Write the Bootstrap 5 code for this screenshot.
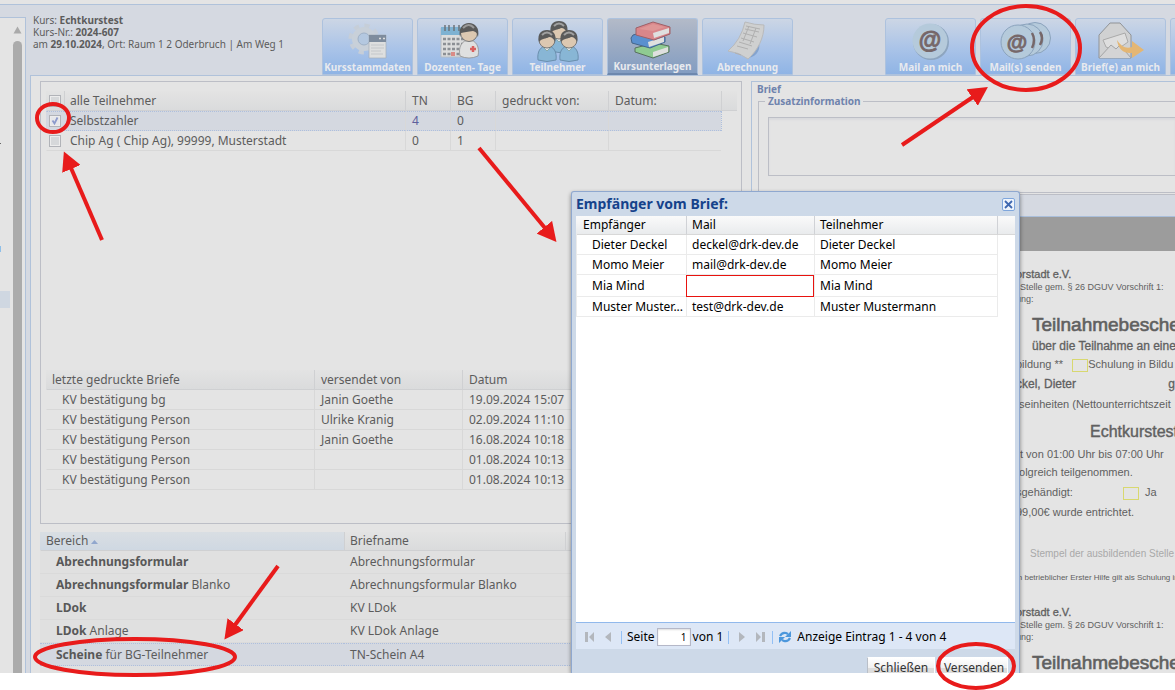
<!DOCTYPE html>
<html lang="de">
<head>
<meta charset="utf-8">
<meta name="viewport" content="width=device-width, initial-scale=1">
<title>Kursunterlagen</title>
<link href="https://cdn.jsdelivr.net/npm/bootstrap@5.3.0/dist/css/bootstrap.min.css" rel="stylesheet">
<script src="https://cdn.jsdelivr.net/npm/bootstrap@5.3.0/dist/js/bootstrap.bundle.min.js" defer></script>
<style>
  body { font: 12px/16px "Noto Sans", "Open Sans", sans-serif; color: #5c5c5c; background: #fff; }
  .app { height: calc(100vh - 17px); background: #e4e4e4; overflow: hidden; }
  .fit { min-width: 0; min-height: 0; }
  .topline { height: 5px; border-bottom: 1px solid #b0c2da; }
  .frame { background: #d5d9e1; }
  .side { width: 26px; margin-top: 12px; background: #e4e4e4; border: solid #b0c2da; border-width: 1px 1px 0 0; }
  .side .track { width: 9px; margin-left: 13px; padding-top: 8px; }
  .side .thumb { background: #ababab; border-radius: 5px 5px 0 0; margin-top: 7px; }
  .side .marks { width: 10px; top: 124px; left: 0; }
  .toolbar { height: 70px; padding-top: 13px; }
  .info { width: 292px; padding-left: 3px; margin-top: -4px; font-size: 10px; line-height: 12px; }
  .tool { width: 91px; height: 57px; border: 1px solid #adc2de; border-radius: 3px 3px 0 0; background: linear-gradient(#ccd6e5, #a9c3e8 55%, #8fb4e5); color: #e8eaee; font: bold 10px/14px "Noto Sans", sans-serif; }
  .tool svg { display: block; width: 89px; height: 40px; overflow: visible; }
  .tool.current { background: linear-gradient(#b3bac8, #98a9c3 55%, #839dc2); border-bottom: 2px solid #6d88ae; }
  .second { margin-left: 92px; }
  .work { background: #e4e4e4; border: solid #b0c2da; border-width: 1px 0 0 1px; padding: 5px 0 0 9px; gap: 9px; }
  .leftcol { width: 702px; gap: 8px; }
  .box { border: 1px solid #bcbec6; }
  .upper { padding: 9px 4px 33px 5px; height: 443px; }
  .grid { table-layout: fixed; border-collapse: separate; border-spacing: 0; line-height: 16px; }
  .grid th, .grid td { height: 20px; padding: 0 6px; border: solid #d8d8d8; border-width: 0 0 1px 1px; white-space: nowrap; overflow: hidden; font-weight: 400; }
  .grid td:first-child, .grid th:first-child { border-left-color: transparent; }
  .grid th { background: linear-gradient(#e3e3e3, #dadbdc); border-color: #cfd0d2; }
  .grid .pick td { background: #d4d8e0; border-top: 1px dotted #aebfdd; border-bottom: 1px dotted #aebfdd; }
  .grid .void { background: #e4e4e4; border: 0; }
  .grid tr.pick .void { background: #e4e4e4; border: 0; border-left: 1px dotted #aebfdd; }
  .grid td.who { border-left: 0; }
  .grid th.who { padding-left: 5px; }
  .grid .tick { padding: 0 0 0 2px; }
  .hit { color: #5d5f9c; }
  .tick input { display: block; appearance: none; width: 12px; height: 12px; margin: 0; border: 1px solid #b1b3b8; box-shadow: inset 0 0 0 1px #ececec; background: #d6d8da; border-radius: 0; }
  .tick input:checked { background: #e6e7ea url("data:image/svg+xml,%3Csvg xmlns='http://www.w3.org/2000/svg' viewBox='0 0 10 10'%3E%3Cpath d='M2.5 4.5l2 3 3-6' fill='none' stroke='%238d9bcc' stroke-width='1.8'/%3E%3C/svg%3E"); }
  .sent td, .sent th { padding-left: 6px; }
  .sent th:first-child { padding-left: 5px; }
  .sent td:first-child { padding-left: 15px; }
  .letters td { height: 23px; border-left: 0; border-color: #dadada; background: #e0e0e0; }
  .letters th { height: 19px; padding-left: 5px; }
  .letters td:first-child { padding-left: 16px; }
  .letters th.sorted { background: linear-gradient(#d9dee3, #cfd8e2); }
  .letters b { color: #585858; }
  .brief { border: solid #b0c2da; border-width: 1px 0 0 1px; font-size: 10px; color: #6f83ad; font-weight: 700; }
  .brief .head { padding: 0 5px; line-height: 15px; }
  .brief fieldset { margin: 4px 0 0 6px; border: solid #bcbec6; border-width: 1px 0 1px 1px; height: 92px; padding: 15px 0 0 9px; }
  .brief .cap { position: absolute; top: -8px; left: 6px; padding: 0 3px; background: #e4e4e4; line-height: 15px; }
  .brief textarea { display: block; width: 100%; height: 59px; border: 1px solid #bcbec6; border-right: 0; background: #e4e4e4; resize: none; box-shadow: inset 0 2px 2px #d9dadd; }
  .preview { margin-top: 1px; border-top: 1px solid #bcbec6; }
  .preview .bar { height: 22px; background: #d5d9e1; border-bottom: 1px solid #aabfdb; }
  .preview .dark { height: 34px; background: #9c9c9c; margin-bottom: 16px; }
  .doc { padding-left: 265px; font: 11px/18px "Liberation Sans", Arial, sans-serif; color: #606060; white-space: nowrap; }
  .doc .org { line-height: 14px; -webkit-text-stroke: .3px; }
  .doc .tiny { font-size: 9px; line-height: 12px; }
  .doc .firm { font-size: 12px; -webkit-text-stroke: .3px; }
  .doc .tall { line-height: 22px; }
  .doc .in { padding-left: 16px; }
  .doc h2 { font: 19px/24px "Liberation Sans", Arial, sans-serif; -webkit-text-stroke: .6px; margin: 8px 0 0 16px; }
  .doc h3 { font: 16px/26px "Liberation Sans", Arial, sans-serif; -webkit-text-stroke: .4px; margin: 6px 0 0 74px; }
  .doc .stamp { margin-top: 24px; padding-left: 14px; color: #a9a9a9; font-size: 10px; }
  .doc .note { margin: 8px 0 20px; font-size: 8px; line-height: 14px; }
  .doc .check { display: inline-block; width: 16px; height: 13px; border: 1px solid #d8d870; vertical-align: middle; }
  .doc .given { gap: 50px; }
  .dialog { z-index: 2; left: 571px; top: 191px; bottom: 0; width: 449px; border: 1px solid #8fa8cf; border-bottom: 0; border-radius: 3px 3px 0 0; background: #cdd9e8; color: #000; padding: 0 4px; box-shadow: 0 2px 4px rgba(0,0,0,.45); }
  .dialog .caption { height: 24px; color: #15428b; font-size: 14px; font-weight: 700; margin: 0; }
  .dialog .x { width: 13px; height: 13px; border: 1px solid #7fa6dc; border-radius: 2px; background: #eef4fc; padding: 0; }
  .dialog .x svg { display: block; width: 11px; height: 11px; }
  .dialog .body { background: #fff; }
  .dialog .grid th, .dialog .grid td { border-color: #ebebeb; padding-left: 5px; padding-right: 0; }
  .dialog .grid th { background: linear-gradient(#fafafa, #e9ebed); height: 19px; border-left-color: #d0d2d6; border-bottom-color: #d8d8d8; }
  .dialog .grid th:first-child { padding-left: 6px; border-left-color: transparent; }
  .dialog .grid td:first-child { padding-left: 15px; }
  .dialog .grid .void { background: #fff; border: 0; border-left: 1px solid #ebebeb; }
  .dialog .grid td.missing { border: 1px solid #e8130f; height: 22px; }
  .pager { height: 27px; background: #dde7f6; border-top: 1px solid #91b9ec; padding: 2px 6px 0 7px; gap: 5px; }
  .pager button { border: 0; padding: 0; background: none; flex: none; }
  .pager svg { display: block; width: 14px; height: 14px; }
  .pager .rule { width: 1px; height: 13px; background: #93c0f5; flex: none; }
  .pager label { gap: 2px; }
  .pager input { width: 34px; height: 18px; border: 1px solid #b5b8c8; padding: 0 3px; text-align: right; font-size: 10px; line-height: 14px; box-shadow: inset 0 1px 2px #ddd; }
  .foot { height: 24px; padding: 8px 7px 0 0; gap: 5px; }
  .foot button { width: 68px; height: 22px; border: 1px solid #fff; border-bottom-color: #bbb; border-left-color: #b9bfc8; background: linear-gradient(#fff, #f0f0f0 50%, #dcdcdc 51%); color: #333; padding: 0; font-size: 12px; line-height: 18px; flex: none; }
  .marker { z-index: 3; pointer-events: none; left: 0; top: 0; }
</style>
</head>
<body>
<div class="position-relative overflow-hidden vh-100">
<div class="app d-flex flex-column position-relative">
  <div class="topline flex-shrink-0"></div>
  <div class="frame fit d-flex flex-grow-1">
    <aside class="side position-relative flex-shrink-0">
      <div class="track h-100 d-flex flex-column">
        <svg width="9" height="8" class="flex-shrink-0"><path d="M4.500 0.500L8.500 7.500H.5z" fill="#aaa"/></svg>
        <div class="thumb flex-grow-1"></div>
      </div>
      <svg class="marks position-absolute" height="180"><path d="M0 1h1v1H0z" fill="#666"/><path d="M0 104h1v6H0z" fill="#8fbfe8"/><path d="M0 149h10v17H0z" fill="#cfd7e1"/></svg>
    </aside>
    <main class="fit d-flex flex-column flex-grow-1 ms-1">
      <nav class="toolbar d-flex flex-shrink-0 overflow-hidden">
        <div class="info flex-shrink-0 text-nowrap">Kurs: <b>Echtkurstest</b><br>Kurs-Nr.: <b>2024-607</b><br>am <b>29.10.2024</b>, Ort: Raum 1 2 Oderbruch | Am Weg 1</div>
        <div class="d-flex gap-1 flex-shrink-0">
          <button class="tool p-0 text-nowrap"><svg viewBox="0 0 89 40">
            <circle cx="41" cy="19" r="13" fill="none" stroke="#c6ced8" stroke-width="5" stroke-dasharray="5 5.210"/><circle cx="41" cy="19" r="9" fill="#b4c8e0" stroke="#c8d0d9" stroke-width="6"/><circle cx="41" cy="19" r="6" fill="none" stroke="#9fb1c7"/>
            <path d="M46 15h17v23H46z" fill="#dedfdf" stroke="#a7b0b9" stroke-width=".7"/><path d="M46 15h17v7H46z" fill="#7e8c9d"/><path d="M56 18.500h2m2 0h2" stroke="#ddd" stroke-width="1.500"/><path d="M48 25h13M48 28h13M48 31h10M48 34h12" stroke="#c4c7ca"/></svg>Kursstammdaten</button>
          <button class="tool p-0 text-nowrap"><svg viewBox="0 0 89 40">
            <path d="M23 8h28v29H23z" fill="#dcdddd" stroke="#b5bcc4"/><path d="M23 7h28v8H23z" fill="#7eb2d2"/><path d="M27 5v6m4-6v6m5-6v6m5-6v6m5-6v6" stroke="#6e7378" stroke-width="1.500"/><path d="M25 19h21M25 24h21M25 29h21M25 34h20" stroke="#8b8f94" stroke-width="2.500" stroke-dasharray="3 1.500"/><path d="M33 32h4v4h-4z" fill="#da8c87"/>
            <path d="M42 36c-2-9 2-16 9-16s11 7 9 16q-9 4-18 0z" fill="#dfe0e0" stroke="#888" stroke-width=".7"/><circle cx="51" cy="13" r="8.500" fill="#dcc8b1" stroke="#777"/><path d="M42 17c-2-9 3-14 9-14s11 5 9 14c-1-3-1-5-5-6-5 1-9 1-12 2z" fill="#5a5a5a"/><path d="M45 8q6-6 11 0" stroke="#999" fill="none" stroke-width="2"/><path d="M55 26v6m-3-3h6" stroke="#d9605f" stroke-width="2.500"/></svg>Dozenten- Tage</button>
          <button class="tool p-0 text-nowrap"><svg viewBox="0 0 89 40">
            <g id="pp"><path d="M37 31c-1-8 2-14 9-14s10 6 9 14q-9 3-18 0z" fill="#88b6d5" stroke="#6b8fae"/><path d="M42 18l4 4 4-4" fill="#dfe3e6" stroke="#8aa"/><circle cx="46" cy="11" r="8" fill="#dcc8b1" stroke="#777"/><path d="M38 13c-2-8 2-12 8-12s10 4 8 12c-1-3-3-5-6-5-3 2-7 1-10 5z" fill="#5a5a5a"/><path d="M41 6q5-5 10 0" stroke="#a0a0a0" fill="none" stroke-width="2"/></g>
            <use href="#pp" x="-12" y="9"/><use href="#pp" x="10" y="9"/></svg>Teilnehmer</button>
          <button class="tool current p-0 text-nowrap"><svg viewBox="0 0 89 40">
            <path d="M27 29l19-5 15 3v6l-16 6-18-6z" fill="#8fcb92" stroke="#58705e"/><path d="M45 33l15-5v5l-15 5z" fill="#dfe0df"/><path d="M23 19l2-3 15-4 17 6v5l-15 6-18-5z" fill="#5a90cf" stroke="#44658a"/><path d="M40 23l16-5v5l-15 5z" fill="#dfe0df"/><path d="M28 9l17-6 17 5v7l-16 6-18-5z" fill="#d9868a" stroke="#9d6067"/><path d="M45 14l16-5v5l-15 5z" fill="#dfe0df"/><path d="M31 10l14-5 12 3-12 4z" fill="#df9696"/></svg>Kursunterlagen</button>
          <button class="tool p-0 text-nowrap"><svg viewBox="0 0 89 40">
            <path d="M43 38c8 0 15-6 13-15l-6 0z" fill="#7394c0" opacity=".65"/><path d="M42 2q10 3 19 3c0 13-6 25-16 34q-9-7-20-8Q38 20 42 2z" fill="#cfd0d0" stroke="#b9babb"/><path d="M43 6l14 3M42 9l14 3M40 13l14 4M38 18l13 4M36 22l13 4M34 26l11 3M46 6l-6 15M53 8l-6 16M32 33l6 2" stroke="#b0b0b0" fill="none"/></svg>Abrechnung</button>
        </div>
        <div class="second d-flex gap-1 flex-shrink-0">
          <button class="tool p-0 text-nowrap"><svg viewBox="0 0 89 40"><circle cx="45" cy="22" r="18" fill="#8da5bf"/><circle cx="44" cy="21" r="17.500" fill="#b5cadb"/><text x="44" y="28" text-anchor="middle" font-family="Liberation Sans" font-weight="bold" font-size="23" fill="#766769" stroke="#766769" stroke-width=".8">@</text></svg>Mail an mich</button>
          <button class="tool p-0 text-nowrap"><svg viewBox="0 0 89 40"><g fill="#b5cadb" stroke="#8ba3bd"><circle cx="54" cy="18" r="15.500"/><circle cx="46" cy="20" r="16"/><circle cx="37" cy="22" r="17"/></g><path d="M51 13q4 7 0 15m8-16q4 6 0 13" fill="none" stroke="#766769" stroke-width="2.500"/><text x="36" y="29" text-anchor="middle" font-family="Liberation Sans" font-weight="bold" font-size="21" fill="#766769" stroke="#766769" stroke-width=".8">@</text></svg>Mail(s) senden</button>
          <button class="tool p-0 text-nowrap"><svg viewBox="0 0 89 40"><path d="M23 15L34 3h10l11 12v23H23z" fill="#d0d1d2" stroke="#909396"/><path d="M27 20l22-7 3 9-13 9-9-4z" fill="#dedede" stroke="#aaa"/><path d="M23 38l12-13 5 4 4-4 11 13" fill="#d4d4d5" stroke="#a3a4a5"/><path d="M41 20q6 10 15 7v-6l12 9-12 8v-5Q43 34 41 20z" fill="#e4b673"/></svg>Brief(e) an mich</button>
          <button class="tool p-0 text-nowrap" aria-label="Weitere Briefe"></button>
        </div>
      </nav>
      <div class="work d-flex flex-grow-1 overflow-hidden">
        <section class="leftcol d-flex flex-column flex-shrink-0">
          <div class="box upper d-flex flex-column justify-content-between flex-shrink-0">
            <table class="grid w-100">
              <colgroup><col style="width:18px"><col><col style="width:45px"><col style="width:45px"><col style="width:113px"><col style="width:113px"><col style="width:16px"></colgroup>
              <thead><tr><th class="tick"><input type="checkbox" id="c0"></th><th class="who"><label for="c0">alle Teilnehmer</label></th><th>TN</th><th>BG</th><th>gedruckt von:</th><th>Datum:</th><th></th></tr></thead>
              <tbody><tr class="pick"><td class="tick"><input type="checkbox" id="c1" checked></td><td class="who"><label for="c1">Selbstzahler</label></td><td class="hit">4</td><td>0</td><td></td><td></td><td class="void"></td></tr>
              <tr><td class="tick"><input type="checkbox" id="c2"></td><td class="who"><label for="c2">Chip Ag ( Chip Ag), 99999, Musterstadt</label></td><td>0</td><td>1</td><td></td><td></td><td class="void"></td></tr></tbody>
            </table>
            <table class="grid w-100 sent">
              <colgroup><col style="width:268px"><col style="width:148px"><col></colgroup>
              <thead><tr><th>letzte gedruckte Briefe</th><th>versendet von</th><th>Datum</th></tr></thead>
              <tbody><tr><td>KV bestätigung bg</td><td>Janin Goethe</td><td>19.09.2024 15:07</td></tr>
              <tr><td>KV bestätigung Person</td><td>Ulrike Kranig</td><td>02.09.2024 11:10</td></tr>
              <tr><td>KV bestätigung Person</td><td>Janin Goethe</td><td>16.08.2024 10:18</td></tr>
              <tr><td>KV bestätigung Person</td><td></td><td>01.08.2024 10:13</td></tr>
              <tr><td>KV bestätigung Person</td><td></td><td>01.08.2024 10:13</td></tr></tbody>
            </table>
          </div>
          <table class="grid w-100 letters">
            <colgroup><col style="width:304px"><col style="width:221px"><col></colgroup>
            <thead><tr><th class="sorted">Bereich <svg width="7" height="4"><path d="M3.500 0L7 4H0z" fill="#91a7cd"/></svg></th><th>Briefname</th><th></th></tr></thead>
            <tbody><tr><td><b>Abrechnungsformular</b></td><td>Abrechnungsformular</td><td></td></tr>
            <tr><td><b>Abrechnungsformular</b> Blanko</td><td>Abrechnungsformular Blanko</td><td></td></tr>
            <tr><td><b>LDok</b></td><td>KV LDok</td><td></td></tr>
            <tr><td><b>LDok</b> Anlage</td><td>KV LDok Anlage</td><td></td></tr>
            <tr class="pick"><td><b>Scheine</b> für BG-Teilnehmer</td><td>TN-Schein A4</td><td></td></tr>
            <tr><td></td><td></td><td></td></tr></tbody>
          </table>
        </section>
        <section class="fit flex-grow-1">
          <div class="brief">
            <div class="head">Brief</div>
            <fieldset class="position-relative"><label class="cap" for="zusatz">Zusatzinformation</label><textarea id="zusatz"></textarea></fieldset>
          </div>
          <div class="preview">
            <div class="bar"></div><div class="dark"></div>
            <div class="doc">
              <div class="org">orstadt e.V.</div>
              <div class="tiny ps-1">Stelle gem. § 26 DGUV Vorschrift 1:</div>
              <div class="tiny">ung:</div>
              <h2>Teilnahmebesche</h2>
              <div class="firm in">über die Teilnahme an eine</div>
              <div class="lh-20">bildung **&nbsp;&nbsp; <span class="check"></span>Schulung in Bildu</div>
              <div class="firm tall d-flex justify-content-between"><span>ckel, Dieter</span><span>g</span></div>
              <div>tseinheiten (Nettounterrichtszeit</div>
              <h3>Echtkurstest</h3>
              <div class="ps-1">t von 01:00 Uhr bis 07:00 Uhr</div>
              <div>folgreich teilgenommen.</div>
              <div class="tall d-flex align-items-center given"><span>sgehändigt:</span><span><span class="check"></span>&nbsp; Ja</span></div>
              <div>99,00€ wurde entrichtet.</div>
              <div class="stamp">Stempel der ausbildenden Stelle</div>
              <div class="note">in betrieblicher Erster Hilfe gilt als Schulung in</div>
              <div class="org">orstadt e.V.</div>
              <div class="tiny ps-1">Stelle gem. § 26 DGUV Vorschrift 1:</div>
              <div class="tiny">ung:</div>
              <h2>Teilnahmebesche</h2>
            </div>
          </div>
        </section>
      </div>
    </main>
  </div>

  <div class="dialog position-absolute d-flex flex-column" role="dialog" aria-labelledby="dlg">
    <div class="d-flex justify-content-between align-items-center"><h1 class="caption d-flex align-items-center" id="dlg">Empfänger vom Brief:</h1>
      <button class="x" aria-label="Schließen"><svg viewBox="0 0 11 11"><path d="M2 2l7 7M9 2L2 9" stroke="#3f68b0" stroke-width="1.800"/></svg></button></div>
    <div class="body flex-grow-1">
      <table class="grid w-100">
        <colgroup><col style="width:110px"><col style="width:128px"><col><col style="width:18px"></colgroup>
        <thead><tr><th>Empfänger</th><th>Mail</th><th>Teilnehmer</th><th></th></tr></thead>
        <tbody><tr><td>Dieter Deckel</td><td>deckel@drk-dev.de</td><td>Dieter Deckel</td><td class="void"></td></tr>
        <tr><td>Momo Meier</td><td>mail@drk-dev.de</td><td>Momo Meier</td><td class="void"></td></tr>
        <tr><td>Mia Mind</td><td class="missing"></td><td>Mia Mind</td><td class="void"></td></tr>
        <tr><td>Muster Muster...</td><td>test@drk-dev.de</td><td>Muster Mustermann</td><td class="void"></td></tr></tbody>
      </table>
    </div>
    <div class="pager d-flex align-items-center flex-shrink-0 text-nowrap">
      <button aria-label="Erste Seite"><svg viewBox="0 0 14 14"><path d="M2 2h3v10H2zM11 2v10L6 7z" fill="#b3b7bd"/></svg></button>
      <button aria-label="Vorige Seite"><svg viewBox="0 0 14 14"><path d="M9 2v10L3 7z" fill="#b3b7bd"/></svg></button>
      <span class="rule"></span>
      <label class="d-flex align-items-center">Seite <input type="text" value="1"> von 1</label>
      <span class="rule"></span>
      <button aria-label="Nächste Seite"><svg viewBox="0 0 14 14"><path d="M5 2v10l6-5z" fill="#b3b7bd"/></svg></button>
      <button aria-label="Letzte Seite"><svg viewBox="0 0 14 14"><path d="M9 2h3v10H9zM3 2v10l5-5z" fill="#b3b7bd"/></svg></button>
      <span class="rule"></span>
      <button aria-label="Neu laden"><svg viewBox="0 0 14 14"><path d="M2 6Q4 2 8 3l2 1M12 8q-2 4-6 3l-2-1" fill="none" stroke="#4c97dc" stroke-width="2.200"/><path d="M13 1v6H7zM1 13V7h6z" fill="#4c97dc"/></svg></button>
      <span>Anzeige Eintrag 1 - 4 von 4</span>
    </div>
    <div class="foot d-flex justify-content-end flex-shrink-0 overflow-hidden"><button>Schließen</button><button>Versenden</button></div>
  </div>
</div>
<svg class="marker position-absolute w-100 h-100" fill="none" stroke="#e81b1b" stroke-width="4" aria-hidden="true">
  <defs><marker id="tip" markerUnits="userSpaceOnUse" markerWidth="20" markerHeight="20" refX="1" refY="10" orient="auto"><path d="M0 0l19 10-19 10z" fill="#e81b1b" stroke="none"/></marker></defs>
  <ellipse cx="53" cy="118" rx="16" ry="14"/><ellipse cx="1026" cy="48" rx="54" ry="42"/><ellipse cx="135" cy="657" rx="100" ry="18"/><ellipse cx="976" cy="666" rx="38" ry="22"/>
  <g marker-end="url(#tip)"><path marker-end="url(#tip)" d="M102 240L71 168"/><path marker-end="url(#tip)" d="M479 148L545 228"/><path marker-end="url(#tip)" d="M902 145L973 97"/><path marker-end="url(#tip)" d="M278 566L235 625"/></g>
</svg>
</div>
</body>
</html>
